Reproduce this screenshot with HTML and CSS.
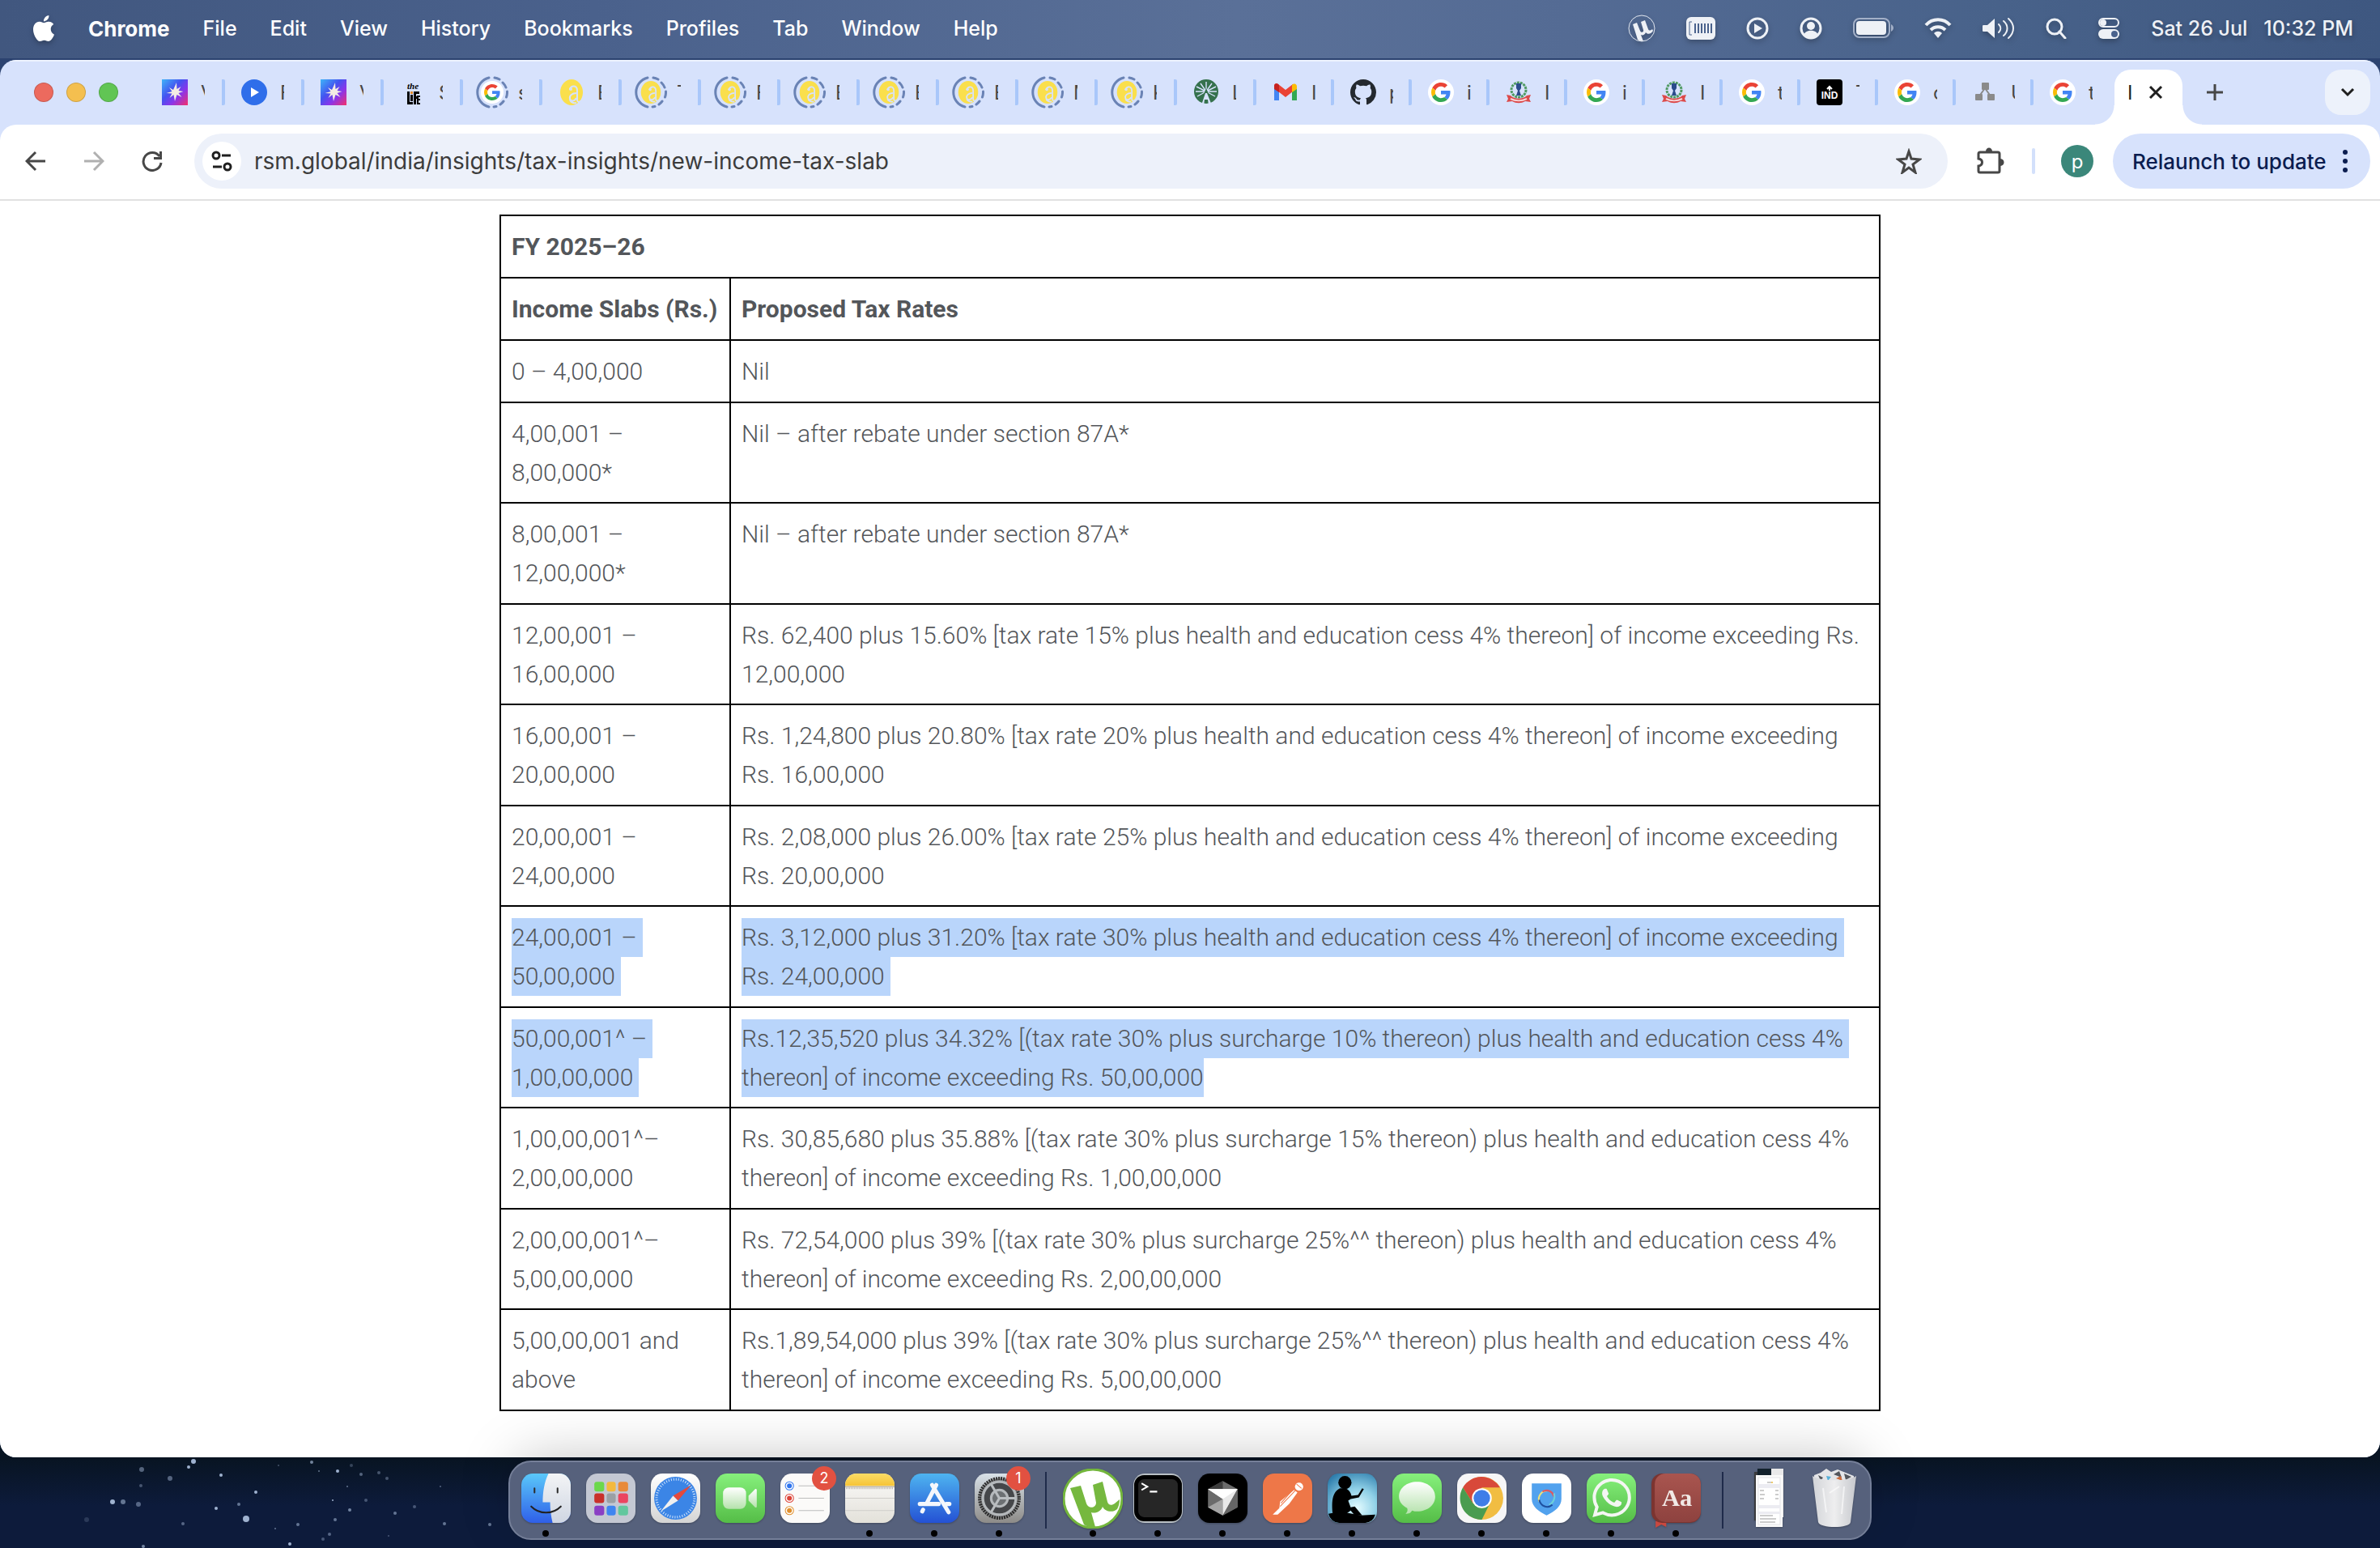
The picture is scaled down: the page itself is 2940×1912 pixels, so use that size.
FILE: index.html
```html
<!DOCTYPE html>
<html lang="en">
<head>
<meta charset="utf-8">
<title>New income tax slab</title>
<link rel="stylesheet" href="styles.css">
</head>
<body>
<svg class="sprite" aria-hidden="true">
  <defs>
    <linearGradient id="gStar" x1="0" y1="0" x2="1" y2="1"><stop offset="0" stop-color="#3fb4f8"/><stop offset=".4" stop-color="#4353f0"/><stop offset=".65" stop-color="#8a35ea"/><stop offset="1" stop-color="#f5306a"/></linearGradient>
    <linearGradient id="gBlue" x1="0" y1="0" x2="0" y2="1"><stop offset="0" stop-color="#5ac8fa"/><stop offset="1" stop-color="#2f5fe8"/></linearGradient>
    <linearGradient id="gStore" x1="0" y1="0" x2="0" y2="1"><stop offset="0" stop-color="#4eb4f0"/><stop offset="1" stop-color="#2451d4"/></linearGradient>
    <linearGradient id="gGrey" x1="0" y1="0" x2="0" y2="1"><stop offset="0" stop-color="#f3f4f6"/><stop offset="1" stop-color="#cfd6e2"/></linearGradient>
    <linearGradient id="gGreen" x1="0" y1="0" x2="0" y2="1"><stop offset="0" stop-color="#86f07c"/><stop offset="1" stop-color="#55bd47"/></linearGradient>
    <linearGradient id="gWhite" x1="0" y1="0" x2="0" y2="1"><stop offset="0" stop-color="#ffffff"/><stop offset="1" stop-color="#d4d4d4"/></linearGradient>
    <linearGradient id="gCam" x1="0" y1="0" x2="0" y2="1"><stop offset="0" stop-color="#ffffff"/><stop offset="1" stop-color="#b5e2ac"/></linearGradient>
    <linearGradient id="gYellow" x1="0" y1="0" x2="0" y2="1"><stop offset="0" stop-color="#fbdc66"/><stop offset="1" stop-color="#f6c436"/></linearGradient>
    <linearGradient id="gNote" x1="0" y1="0" x2="0" y2="1"><stop offset="0" stop-color="#fbfaf9"/><stop offset="1" stop-color="#e3e1da"/></linearGradient>
    <linearGradient id="gSet" x1="0" y1="0" x2="0" y2="1"><stop offset="0" stop-color="#d8e1e8"/><stop offset="1" stop-color="#8d8b88"/></linearGradient>
    <linearGradient id="gBook" x1="0" y1="0" x2="0" y2="1"><stop offset="0" stop-color="#a9554f"/><stop offset="1" stop-color="#8e423f"/></linearGradient>
    <radialGradient id="gSky" cx=".6" cy=".7" r=".8"><stop offset="0" stop-color="#e3fbff"/><stop offset=".5" stop-color="#8ecfe6"/><stop offset="1" stop-color="#2f7fae"/></radialGradient>
    <linearGradient id="gTrash" x1="0" y1="0" x2="1" y2="0"><stop offset="0" stop-color="#d2d4d8"/><stop offset=".5" stop-color="#eeeeef"/><stop offset="1" stop-color="#c6c8cd"/></linearGradient>
  </defs>

  <symbol id="apple" viewBox="0 0 24 24"><path fill="#fff" d="M12.152 6.896c-.948 0-2.415-1.078-3.96-1.04-2.04.027-3.91 1.183-4.961 3.014-2.117 3.675-.546 9.103 1.519 12.09 1.013 1.454 2.208 3.09 3.792 3.039 1.52-.065 2.09-.987 3.935-.987 1.831 0 2.35.987 3.96.948 1.637-.026 2.676-1.48 3.676-2.948 1.156-1.688 1.636-3.325 1.662-3.415-.039-.013-3.182-1.221-3.22-4.857-.026-3.04 2.48-4.494 2.597-4.559-1.429-2.09-3.623-2.324-4.39-2.376-2-.156-3.675 1.09-4.61 1.09zM15.53 3.83c.843-1.012 1.4-2.427 1.245-3.83-1.207.052-2.662.805-3.532 1.818-.78.896-1.454 2.338-1.273 3.714 1.338.104 2.715-.688 3.559-1.701"/></symbol>

  <!-- favicons, 32 by 32 -->
  <symbol id="star" viewBox="0 0 32 32"><rect width="32" height="32" fill="url(#gStar)"/><path fill="#f4ece4" d="M18 4l.5 8 5-3-3 5 6 1-6 2 4 5-6-3-2.500 8-1.500-8-5 4 3-5.500-7-.5 7-2-3.500-5 5 3z"/></symbol>
  <symbol id="play" viewBox="0 0 32 32"><circle cx="16" cy="16" r="16" fill="#2f6eea"/><path fill="#fff" d="M12 10v12l10-6z"/></symbol>
  <symbol id="g" viewBox="0 0 48 48"><path fill="#EA4335" d="M24 9.500c3.540 0 6.710 1.220 9.210 3.600l6.850-6.850C35.900 2.380 30.470 0 24 0 14.620 0 6.510 5.380 2.560 13.220l7.980 6.190C12.430 13.720 17.740 9.500 24 9.500z"/><path fill="#4285F4" d="M46.980 24.550c0-1.570-.15-3.090-.38-4.550H24v9.020h12.940c-.58 2.960-2.260 5.480-4.780 7.180l7.730 6c4.510-4.180 7.090-10.360 7.090-17.650z"/><path fill="#FBBC05" d="M10.530 28.590c-.48-1.450-.76-2.990-.76-4.590s.27-3.140.76-4.590l-7.980-6.190C.92 16.460 0 20.120 0 24c0 3.880.92 7.540 2.560 10.780l7.970-6.190z"/><path fill="#34A853" d="M24 48c6.480 0 11.930-2.130 15.890-5.810l-7.730-6c-2.150 1.450-4.920 2.300-8.160 2.300-6.260 0-11.570-4.220-13.470-9.910l-7.980 6.190C6.510 42.620 14.620 48 24 48z"/></symbol>
  <symbol id="google" viewBox="0 0 32 32"><circle cx="16" cy="16" r="16" fill="#fff"/><use href="#g" x="4" y="4" width="24" height="24"/></symbol>
  <symbol id="amark" viewBox="0 0 32 32"><ellipse cx="16" cy="16" rx="14" ry="16" fill="#fadf4c"/><path fill="none" stroke="#d7e2fc" stroke-width="2" stroke-linecap="round" d="M14 12c2-5 9-5 9 2v11c0 3 2 4 4 2"/><path fill="none" stroke="#d7e2fc" stroke-width="2" d="M22 17c-5 0-9 3-8 7s6 3 8-1M14 24c0 4 4 6 8 5"/><circle cx="15" cy="12" r="2" fill="#d7e2fc"/></symbol>
  <symbol id="ring" viewBox="0 0 40 40"><g fill="none" stroke="#6a83b5" stroke-width="3" stroke-linecap="round"><path d="M16 2a18.500 18.500 0 0 0 0 36"/><path d="M23 2a18 18 0 0 1 6 2M33 8a18 18 0 0 1 4 6M38.500 19a18 18 0 0 1-1 7M34 31a18 18 0 0 1-4 4M25 37.500a18 18 0 0 1-3 .5"/></g></symbol>
  <symbol id="ringG" viewBox="0 0 40 40"><use href="#ring" width="40" height="40"/><circle cx="20" cy="20" r="14" fill="#fff"/><use href="#g" x="10" y="10" width="20" height="20"/></symbol>
  <symbol id="ringA" viewBox="0 0 40 40"><use href="#ring" width="40" height="40"/><use href="#amark" x="6" y="6" width="28" height="28"/></symbol>
  <symbol id="leaf" viewBox="0 0 32 32"><circle cx="16" cy="15" r="15" fill="#35714d"/><g stroke="#d7e2fc" stroke-width="1.400"><path d="M16 15V3M16 15L9 5M16 15L23 5M16 15L4 9M16 15L28 9M16 15L3 15M16 15L29 15M16 15L5 21M16 15L27 21"/></g><path fill="#35714d" d="M12 20l4-9 4 9 3 5H9z"/><path fill="#d7e2fc" d="M10 32l5-15h2l6 15h-4l-1-7h-4l-1 7z"/></symbol>
  <symbol id="gmail" viewBox="0 0 32 32"><path fill="#4285f4" d="M2 9v17h6V14z"/><path fill="#34a853" d="M24 14v12h6V9z"/><path fill="#ea4335" d="M2 8c0-3 3-4 5-2l9 7 9-7v9l-9 7-9-7-5-4z"/><path fill="#fbbc04" d="M24 7c3-3 6-1 6 2v3l-6 4z"/><path fill="#c5221f" d="M2 8v4l6 4V7C6 4 2 5 2 8z"/></symbol>
  <symbol id="github" viewBox="0 0 16 16"><path fill="#24292f" d="M8 0C3.580 0 0 3.580 0 8c0 3.540 2.290 6.530 5.470 7.590.4.070.55-.17.55-.38 0-.19-.01-.82-.01-1.490-2.010.37-2.530-.49-2.690-.94-.09-.23-.48-.94-.82-1.130-.28-.15-.68-.52-.01-.53.63-.01 1.080.58 1.230.82.72 1.210 1.870.87 2.330.66.070-.52.280-.87.510-1.070-1.780-.2-3.640-.89-3.640-3.950 0-.87.310-1.590.820-2.150-.080-.2-.360-1.020.080-2.120 0 0 .67-.21 2.200.82.640-.18 1.320-.27 2-.27s1.360.090 2 .27c1.530-1.040 2.200-.82 2.200-.82.440 1.100.160 1.920.080 2.120.510.560.820 1.270.820 2.150 0 3.070-1.870 3.750-3.650 3.950.290.250.540.730.540 1.480 0 1.070-.01 1.930-.01 2.200 0 .210.150.460.550.380A8.010 8.010 0 0016 8c0-4.420-3.580-8-8-8z"/></symbol>
  <symbol id="emblem" viewBox="0 0 32 32"><circle cx="16" cy="13" r="9" fill="none" stroke="#4f9a62" stroke-width="3" stroke-dasharray="3 1"/><path fill="#2b4b8c" d="M13 5h6v6l-2 3 2 6h-6l2-6-2-3z"/><path fill="#dc4a4a" d="M1 19l5 1c5 5 15 5 20 0l5-1-2 5 2 4-7-1c-5 3-11 3-16 0l-7 1 2-4z"/><path d="M6 24c6 3 14 3 20 0" stroke="#f7d5d8" stroke-width="2" fill="none"/></symbol>
  <symbol id="tree" viewBox="0 0 32 32"><path d="M16 11L8 22M16 11l8 11" stroke="#8a8a8a" stroke-width="2"/><g fill="#8a8a8a"><rect x="12" y="4" width="9" height="9" rx="1"/><rect x="4" y="18" width="9" height="8" rx="1"/><rect x="19" y="18" width="9" height="8" rx="1"/></g></symbol>

  <!-- dock icons, 60 by 60 -->
  <symbol id="finder" viewBox="0 0 60 60"><rect width="60" height="60" rx="14" fill="url(#gBlue)"/><path fill="url(#gGrey)" d="M33 0h13a14 14 0 0 1 14 14v32a14 14 0 0 1-14 14h-8c-2-8-3-16-3-25h-9c0-13 2-25 7-35z"/><path d="M16 18v5M44 18v5" stroke="#2b2b2b" stroke-width="2" stroke-linecap="round"/><path d="M12 40c10 10 26 10 36 0" fill="none" stroke="#222" stroke-width="2" stroke-linecap="round"/></symbol>
  <symbol id="launchpad" viewBox="0 0 60 60"><rect width="60" height="60" rx="14" fill="#c4c8d3"/><rect x="10" y="10" width="12" height="12" rx="3" fill="#6bd84c"/><rect x="25" y="10" width="11" height="12" rx="3" fill="#f3b93e"/><rect x="39" y="10" width="12" height="12" rx="3" fill="#e88a3a"/><rect x="10" y="24" width="12" height="12" rx="3" fill="#c9302a"/><rect x="25" y="24" width="11" height="12" rx="3" fill="#9ba0a5"/><rect x="39" y="24" width="12" height="12" rx="3" fill="#ea4560"/><rect x="10" y="39" width="12" height="12" rx="3" fill="#8a3fc4"/><rect x="25" y="39" width="11" height="12" rx="3" fill="#3f85f0"/><rect x="39" y="39" width="12" height="12" rx="3" fill="#62c79e"/></symbol>
  <symbol id="safari" viewBox="0 0 60 60"><rect width="60" height="60" rx="14" fill="url(#gWhite)"/><circle cx="30" cy="30" r="26" fill="#3b85e6"/><circle cx="30" cy="30" r="23" fill="none" stroke="#cfe3fb" stroke-width="3" stroke-dasharray="1 2"/><path fill="#e5493c" d="M49 14L27 27l6 6z"/><path fill="#f0f0f0" d="M12 46l15-19 6 6z"/></symbol>
  <symbol id="facetime" viewBox="0 0 60 60"><rect width="60" height="60" rx="14" fill="url(#gGreen)"/><rect x="9" y="17" width="28" height="26" rx="7" fill="url(#gCam)"/><path fill="url(#gCam)" d="M40 27l8-8c1-1 2 0 2 1v20c0 1-1 2-2 1l-8-8z"/></symbol>
  <symbol id="reminders" viewBox="0 0 60 60"><rect width="60" height="60" rx="14" fill="#fbfaf9"/><path d="M22 15h31M22 30h31M22 45h31" stroke="#bdbdbd"/><g fill="#fff" stroke-width="1"><circle cx="11" cy="15" r="5" stroke="#2f74ee"/><circle cx="11" cy="30" r="5" stroke="#dc4439"/><circle cx="11" cy="45" r="5" stroke="#e08f2d"/></g><circle cx="11" cy="15" r="3" fill="#2f74ee"/><circle cx="11" cy="30" r="3" fill="#dc4439"/><circle cx="11" cy="45" r="3" fill="#e08f2d"/></symbol>
  <symbol id="notes" viewBox="0 0 60 60"><rect width="60" height="60" rx="14" fill="url(#gNote)"/><path fill="url(#gYellow)" d="M0 15v-1A14 14 0 0 1 14 0h32a14 14 0 0 1 14 14v1z"/><path d="M0 16h60" stroke="#aaa08a"/><path d="M1 18h58" stroke="#b8b4ae" stroke-width="2" stroke-dasharray="1 1"/><path d="M0 30h60M0 45h60" stroke="#cfcdca"/></symbol>
  <symbol id="store" viewBox="0 0 60 60"><rect width="60" height="60" rx="14" fill="url(#gStore)"/><g stroke="#f4f7fc" stroke-width="5" stroke-linecap="round"><path d="M32 14L20 37M27 14l20 33M12 37h23M44 37h4M16 44l-1 2"/></g></symbol>
  <symbol id="settings" viewBox="0 0 60 60"><rect width="60" height="60" rx="14" fill="url(#gSet)"/><circle cx="30" cy="30" r="24" fill="#8d8f91" stroke="#2d2d2d" stroke-width="4" stroke-dasharray="2 1"/><circle cx="30" cy="30" r="20" fill="#45474a" stroke="#b4b8bb" stroke-width="3"/><circle cx="30" cy="30" r="10" fill="#6c7073" stroke="#b4b8bb" stroke-width="3"/><path d="M30 30h20M30 30L20 13M30 30L20 47" stroke="#b9bdc0" stroke-width="3"/></symbol>
  <symbol id="torrent" viewBox="0 0 74 74"><circle cx="37" cy="37" r="36" fill="#fff" stroke="#73b63c" stroke-width="3"/><path fill="#76b83f" d="M9 24l13-3 7 22c2 7 12 6 12-1l-4-22 12-4 6 25c1 4 5 5 9 2l6-5c0 5-1 8-3 12-6 5-15 3-18-3-2 6-9 9-14 7l5 18c-5 1-10 0-14-3z"/></symbol>
  <symbol id="terminal" viewBox="0 0 60 60"><rect width="60" height="60" rx="14" fill="#b9c0c5"/><rect x="1" y="2" width="58" height="56" rx="12"/><rect x="6" y="7" width="48" height="46" rx="7" fill="#262626"/><path d="M10 12l7 4-7 4M20 22h9" fill="none" stroke="#fff" stroke-width="2"/></symbol>
  <symbol id="cursor" viewBox="0 0 60 60"><rect width="60" height="60" rx="14"/><path fill="#6b6b6b" d="M30 9l18 10v22L30 51 12 41V19z"/><path fill="#3c3c3c" d="M12 19L30 9v10z"/><path fill="#a5a5a5" d="M12 41l18-10v20z"/><path fill="#e9e9e9" d="M12 19h36L30 51V31z"/><path fill="#666" d="M30 51l18-32v22z"/><path fill="#fff" d="M12 19h36L30 31z"/></symbol>
  <symbol id="postman" viewBox="0 0 60 60"><rect width="60" height="60" rx="14" fill="#ee7748"/><circle cx="44" cy="16" r="5" fill="#fff"/><path fill="#fff" d="M38 20l4 3-10 14-14 13-6 0 8-8 1-8z"/><path d="M41 13l6 5M40 20L21 40M36 20L22 36" stroke="#ee7748" stroke-width="1"/></symbol>
  <symbol id="kindle" viewBox="0 0 60 60"><rect width="60" height="60" rx="14" fill="url(#gSky)"/><path d="M1 49c8-2 16-3 24-1l15 3 18-1a14 14 0 0 1-12 10H14A14 14 0 0 1 1 49z"/><circle cx="21" cy="11" r="8"/><path d="M6 48c-1-13-1-25 9-30h7c4 2 6 5 7 9l8-1 5-8 2 1-6 10-10 2-3 2 3 8 5-1 9 11h-9l-5-6-7 5z"/></symbol>
  <symbol id="messages" viewBox="0 0 60 60"><rect width="60" height="60" rx="14" fill="url(#gGreen)"/><path fill="url(#gCam)" d="M30 10c13 0 22 8 22 18s-9 18-22 18c-2 0-4 0-6-1-2 3-4 4-8 4 2-2 3-4 2-7-6-3-10-8-10-14 0-10 9-18 22-18z"/></symbol>
  <symbol id="chrome" viewBox="0 0 60 60"><rect width="60" height="60" rx="14" fill="#f6f6f7"/><circle cx="30" cy="30" r="26" fill="#f1bd42"/><path fill="#d8493a" d="M7 17a26 26 0 0 1 45 0H30L19 36z"/><path fill="#4a9c50" d="M7 17l12 19 11 6 10-6-10 20A26 26 0 0 1 7 17z"/><circle cx="30" cy="30" r="12" fill="#fff"/><circle cx="30" cy="30" r="10" fill="#3f7de8"/></symbol>
  <symbol id="shield" viewBox="0 0 60 60"><rect width="60" height="60" rx="14" fill="#fff"/><path fill="#52a2ee" d="M12 12h36v19c0 9-8 15-18 20-10-5-18-11-18-20z"/><g fill="none" stroke-width="2"><path d="M21 34a10 10 0 0 1 10-13" stroke="#efe27b"/><path d="M25 22c7-4 13 1 14 6" stroke="#dd5a62"/><path d="M39 24c2 6-1 12-6 14" stroke="#6cd0d9"/><path d="M21 32c2 8 10 11 16 6" stroke="#1f4f9f"/></g></symbol>
  <symbol id="whatsapp" viewBox="0 0 60 60"><rect width="60" height="60" rx="14" fill="url(#gGreen)"/><svg x="7" y="6" width="47" height="47" viewBox="0 0 24 24"><path fill="#f4f6f3" d="M17.472 14.382c-.297-.149-1.758-.867-2.030-.967-.273-.099-.471-.148-.67.15-.197.297-.767.966-.94 1.164-.173.199-.347.223-.644.075-.297-.15-1.255-.463-2.390-1.475-.883-.788-1.480-1.761-1.653-2.059-.173-.297-.018-.458.13-.606.134-.133.298-.347.446-.52.149-.174.198-.298.298-.497.099-.198.050-.371-.025-.52-.075-.149-.669-1.612-.916-2.207-.242-.579-.487-.5-.669-.51-.173-.008-.371-.01-.57-.01-.198 0-.52.074-.792.372-.272.297-1.040 1.016-1.040 2.479 0 1.462 1.065 2.875 1.213 3.074.149.198 2.096 3.200 5.077 4.487.709.306 1.262.489 1.694.625.712.227 1.360.195 1.871.118.571-.085 1.758-.719 2.006-1.413.248-.694.248-1.289.173-1.413-.074-.124-.272-.198-.57-.347m-5.421 7.403h-.004a9.870 9.870 0 01-5.031-1.378l-.361-.214-3.741.982.998-3.648-.235-.374a9.860 9.860 0 01-1.510-5.260c.001-5.450 4.436-9.884 9.888-9.884 2.640 0 5.122 1.030 6.988 2.898a9.825 9.825 0 012.893 6.994c-.003 5.450-4.437 9.884-9.885 9.884m8.413-18.297A11.815 11.815 0 0012.050 0C5.495 0 .16 5.335.157 11.892c0 2.096.547 4.142 1.588 5.945L.057 24l6.305-1.654a11.882 11.882 0 005.683 1.448h.005c6.554 0 11.890-5.335 11.893-11.893a11.821 11.821 0 00-3.480-8.413Z"/></svg></symbol>
  <symbol id="minimized" viewBox="0 0 40 74"><rect x="1" y="4" width="8" height="60" fill="#3a3a3c"/><rect x="5" width="32" height="60" fill="#e9e9ea"/><rect x="5" width="17" height="8" fill="#13212c"/><rect x="3" y="8" width="33" height="64" fill="#fafafa"/><rect x="6" y="11" width="27" height="58" fill="#fff" stroke="#e3e3e7"/><path fill="#ececf2" d="M6 19h27v5H6zM6 45h27v4H6zM6 53h27v3H6z"/><path d="M17 17h5M8 27h5M27 27h4M8 32h6M27 32h4M8 37h5M27 37h4M8 58h16M8 62h20M8 66h19" stroke="#999"/><circle cx="23" cy="17" r="1" fill="#e8b93c"/></symbol>
  <symbol id="trash" viewBox="0 0 56 74"><path fill="#e4e5e8" d="M3 8l8-3 7-5 6 4 8-3 10 4 10 4v6H3z"/><path fill="#53565c" d="M8 8l6 3-3 4zM27 7l7-4 3 8zM40 6l9 4-7 4z"/><path fill="#58b0d8" d="M18 9l6 1-4 5z"/><path fill="#c9693a" d="M30 12l6-3 2 6z"/><path fill="url(#gTrash)" d="M1 9c10 7 44 7 54 0l-7 57c-1 8-38 8-40 0z"/><path d="M14 24l4 30M40 22l-3 34M22 30l12-8" stroke="#fff" stroke-width="2" opacity=".6" fill="none"/></symbol>
</svg>

<header class="menubar">
  <nav class="menus">
    <button aria-label="Apple menu"><svg width="32" height="32"><use href="#apple"/></svg></button>
    <button class="app-name">Chrome</button>
    <button>File</button>
    <button>Edit</button>
    <button>View</button>
    <button>History</button>
    <button>Bookmarks</button>
    <button>Profiles</button>
    <button>Tab</button>
    <button>Window</button>
    <button>Help</button>
  </nav>
  <div class="status">
    <svg width="34" height="34" viewBox="0 0 34 34"><circle cx="17" cy="17" r="16" fill="none" stroke="#e3e8f0" stroke-width="1"/><path fill="#eef1f6" d="M6 12l5-2 4 10c1 3 5 2 4-1l-3-10 5-2 4 11c1 2 3 2 5 0l1 2c-2 4-7 5-9 2-1 3-4 4-6 3l3 8c-3 0-5-1-7-2z"/></svg>
    <svg width="36" height="28" viewBox="0 0 36 28"><rect width="36" height="28" rx="6" fill="#eef1f6"/><path d="M7 6H4v16h3" fill="none" stroke="#4a628c" stroke-width="1"/><path d="M11 8v12M15 8v12M19 8v12M23 8v12M27 8v12M31 8v12" fill="none" stroke="#4a628c" stroke-width="2"/></svg>
    <svg width="28" height="28" viewBox="0 0 28 28"><circle cx="14" cy="14" r="12" fill="none" stroke="#eef1f6" stroke-width="3"/><path fill="#eef1f6" d="M10 8v12l10-6z"/></svg>
    <svg width="28" height="28" viewBox="0 0 28 28"><circle cx="14" cy="14" r="12" fill="none" stroke="#eef1f6" stroke-width="3"/><circle cx="14" cy="11" r="5" fill="#eef1f6"/><path fill="#eef1f6" d="M5 22c3-7 15-7 18 0-4 5-14 5-18 0z"/></svg>
    <svg width="50" height="26" viewBox="0 0 50 26"><rect x="1" y="1" width="44" height="23" rx="7" fill="none" stroke="#a3b0c8" stroke-width="2"/><rect x="4" y="4" width="37" height="17" rx="4" fill="#eef1f6"/><path fill="#a3b0c8" d="M47 8c4 2 4 7 0 9z"/></svg>
    <svg width="34" height="26" viewBox="0 0 34 26"><g fill="none" stroke="#eef1f6" stroke-width="4"><path d="M2 9c8-9 22-9 30 0M8 15c5-5 13-5 18 0"/></g><path fill="#eef1f6" d="M17 25l-5-6c3-3 7-3 10 0z"/></svg>
    <svg width="40" height="28" viewBox="0 0 40 28"><path fill="#eef1f6" d="M1 10h5l9-8v24l-9-8H1c-1 0-1-1-1-2v-4c0-1 0-2 1-2z"/><g fill="none" stroke="#eef1f6" stroke-width="2" stroke-linecap="round"><path d="M20 9c3 3 3 7 0 10M26 5c6 5 6 13 0 18M32 2c8 7 8 17 0 24"/></g></svg>
    <svg width="26" height="26" viewBox="0 0 26 26"><circle cx="11" cy="11" r="9" fill="none" stroke="#eef1f6" stroke-width="3"/><path d="M17 17l7 8" stroke="#eef1f6" stroke-width="3" stroke-linecap="round"/></svg>
    <svg width="28" height="28" viewBox="0 0 28 28"><rect x="2" y="2" width="24" height="10" rx="5" fill="none" stroke="#eef1f6" stroke-width="2"/><circle cx="7" cy="7" r="4" fill="#eef1f6"/><rect x="1" y="15" width="26" height="12" rx="6" fill="#eef1f6"/><circle cx="21" cy="21" r="4" fill="#4a628c"/></svg>
    <time class="clock"><span>Sat 26 Jul</span><span>10:32 PM</span></time>
  </div>
</header>

<section class="window">
  <div class="tabstrip">
    <div class="lights"><button class="close" aria-label="Close"></button><button class="minimise" aria-label="Minimise"></button><button class="zoom" aria-label="Zoom"></button></div>
    <nav class="tabs">
      <a href="#" class="tab wide"><svg><use href="#star"/></svg><span>V</span></a>
      <a href="#" class="tab wide"><svg><use href="#play"/></svg><span>F</span></a>
      <a href="#" class="tab wide"><svg><use href="#star"/></svg><span>V</span></a>
      <a href="#" class="tab wide"><svg viewBox="0 0 32 32"><text x="9" y="12" font-family="Liberation Serif, serif" font-style="italic" font-weight="700" font-size="11">the</text><path d="M9 15h3v13h4v3H9zM13 19h3v8h-3zM17 15h7v3h-4v3h3v3h-3v7h-3zM21 20h4v2h-2v2h2v2h-2v3h2v2h-4z"/><path fill="#e08b2c" d="M13 15h3v3h-3z"/></svg><span>S</span></a>
      <a href="#" class="tab wide ringed"><svg><use href="#ringG"/></svg><span>s</span></a>
      <a href="#" class="tab wide"><svg><use href="#amark"/></svg><span>E</span></a>
      <a href="#" class="tab wide ringed"><svg><use href="#ringA"/></svg><span>T</span></a>
      <a href="#" class="tab wide ringed"><svg><use href="#ringA"/></svg><span>F</span></a>
      <a href="#" class="tab wide ringed"><svg><use href="#ringA"/></svg><span>E</span></a>
      <a href="#" class="tab wide ringed"><svg><use href="#ringA"/></svg><span>E</span></a>
      <a href="#" class="tab wide ringed"><svg><use href="#ringA"/></svg><span>E</span></a>
      <a href="#" class="tab wide ringed"><svg><use href="#ringA"/></svg><span>M</span></a>
      <a href="#" class="tab wide ringed"><svg><use href="#ringA"/></svg><span>K</span></a>
      <a href="#" class="tab wide"><svg><use href="#leaf"/></svg><span>L</span></a>
      <a href="#" class="tab"><svg><use href="#gmail"/></svg><span>I</span></a>
      <a href="#" class="tab"><svg><use href="#github"/></svg><span>p</span></a>
      <a href="#" class="tab"><svg><use href="#google"/></svg><span>i</span></a>
      <a href="#" class="tab"><svg><use href="#emblem"/></svg><span>I</span></a>
      <a href="#" class="tab"><svg><use href="#google"/></svg><span>i</span></a>
      <a href="#" class="tab"><svg><use href="#emblem"/></svg><span>I</span></a>
      <a href="#" class="tab"><svg><use href="#google"/></svg><span>t</span></a>
      <a href="#" class="tab"><svg viewBox="0 0 32 32"><rect width="32" height="32" rx="4"/><text x="16" y="24" text-anchor="middle" font-family="Liberation Sans, sans-serif" font-weight="700" font-size="12" fill="#fff">IND</text><path d="M16 14V9m-3 3l3-3 3 3" stroke="#fff" stroke-width="2" fill="none"/></svg><span>T</span></a>
      <a href="#" class="tab"><svg><use href="#google"/></svg><span>c</span></a>
      <a href="#" class="tab"><svg><use href="#tree"/></svg><span>U</span></a>
      <a href="#" class="tab last"><svg><use href="#google"/></svg><span>t</span></a>
      <div class="tab-active"><span>I</span><button aria-label="Close tab"><svg width="18" height="18" viewBox="0 0 18 18"><path d="M2 2l14 14M16 2L2 16" stroke="#1f1f1f" stroke-width="3"/></svg></button></div>
    </nav>
    <button class="new-tab" aria-label="New tab"><svg width="20" height="20" viewBox="0 0 20 20"><path d="M10 0v20M0 10h20" stroke="#474747" stroke-width="3"/></svg></button>
    <button class="tab-search" aria-label="Search tabs"><svg width="18" height="12" viewBox="0 0 18 12"><path d="M2 2l7 7 7-7" fill="none" stroke="#1f1f1f" stroke-width="3"/></svg></button>
  </div>

  <div class="toolbar">
    <div class="history">
      <button aria-label="Back"><svg width="26" height="26" viewBox="0 0 26 26"><path d="M25 13H3M13 2L2 13l11 11" fill="none" stroke="#474747" stroke-width="3"/></svg></button>
      <button aria-label="Forward"><svg width="26" height="26" viewBox="0 0 26 26"><path d="M1 13h22M13 2l11 11-11 11" fill="none" stroke="#b0b0b0" stroke-width="3"/></svg></button>
      <button aria-label="Reload"><svg width="26" height="26" viewBox="0 0 26 26"><path d="M22 7a11 11 0 1 0 2 8" fill="none" stroke="#474747" stroke-width="3"/><path fill="#474747" d="M25 1v10H15V8h7V1z"/></svg></button>
    </div>
    <div class="omnibox">
      <button class="site" aria-label="Site information"><svg width="26" height="26" viewBox="0 0 26 26"><g fill="none" stroke="#1f1f1f" stroke-width="3"><circle cx="6" cy="6" r="4"/><path d="M13 6h11M2 20h11"/><circle cx="20" cy="20" r="4"/></g></svg></button>
      <input type="text" aria-label="Address" value="rsm.global/india/insights/tax-insights/new-income-tax-slab">
      <button aria-label="Bookmark"><svg width="32" height="32" viewBox="0 0 32 32"><path d="M16 4l3 9 10 1-8 6 3 10-8-6-8 6 3-10-8-6 10-1z" fill="none" stroke="#474747" stroke-width="3"/></svg></button>
    </div>
    <button class="extensions" aria-label="Extensions"><svg width="36" height="36" viewBox="0 0 36 36"><path d="M6 7h22a2 2 0 0 1 2 2v21a2 2 0 0 1-2 2H6a2 2 0 0 1-2-2v-6c6-1 6-8 0-9V9a2 2 0 0 1 2-2z" fill="none" stroke="#474747" stroke-width="3"/><path fill="#474747" d="M13 6c0-6 8-6 8 0zM31 15c6 0 6 9 0 9z"/></svg></button>
    <span class="divider"></span>
    <button class="avatar" aria-label="Profile">p</button>
    <button class="relaunch"><span>Relaunch to update</span><svg width="6" height="28" viewBox="0 0 6 28"><g fill="#0b1d50"><circle cx="3" cy="3" r="3"/><circle cx="3" cy="14" r="3"/><circle cx="3" cy="25" r="3"/></g></svg></button>
  </div>

  <main class="page">
    <table class="slabs">
      <colgroup><col class="slab"><col></colgroup>
      <thead>
        <tr><th colspan="2">FY 2025–26</th></tr>
        <tr><th>Income Slabs (Rs.)</th><th>Proposed Tax Rates</th></tr>
      </thead>
      <tbody>
        <tr><td>0 – 4,00,000</td><td>Nil</td></tr>
        <tr><td>4,00,001 –<br>8,00,000*</td><td>Nil – after rebate under section 87A*</td></tr>
        <tr><td>8,00,001 –<br>12,00,000*</td><td>Nil – after rebate under section 87A*</td></tr>
        <tr><td>12,00,001 –<br>16,00,000</td><td>Rs. 62,400 plus 15.60% [tax rate 15% plus health and education cess 4% thereon] of income exceeding Rs.<br>12,00,000</td></tr>
        <tr><td>16,00,001 –<br>20,00,000</td><td>Rs. 1,24,800 plus 20.80% [tax rate 20% plus health and education cess 4% thereon] of income exceeding<br>Rs. 16,00,000</td></tr>
        <tr><td>20,00,001 –<br>24,00,000</td><td>Rs. 2,08,000 plus 26.00% [tax rate 25% plus health and education cess 4% thereon] of income exceeding<br>Rs. 20,00,000</td></tr>
        <tr><td><mark>24,00,001 –</mark><br><mark>50,00,000</mark></td><td><mark>Rs. 3,12,000 plus 31.20% [tax rate 30% plus health and education cess 4% thereon] of income exceeding</mark><br><mark>Rs. 24,00,000</mark></td></tr>
        <tr><td><mark>50,00,001^ –</mark><br><mark>1,00,00,000</mark></td><td><mark>Rs.12,35,520 plus 34.32% [(tax rate 30% plus surcharge 10% thereon) plus health and education cess 4%</mark><br><mark class="end">thereon] of income exceeding Rs. 50,00,000</mark></td></tr>
        <tr><td>1,00,00,001^–<br>2,00,00,000</td><td>Rs. 30,85,680 plus 35.88% [(tax rate 30% plus surcharge 15% thereon) plus health and education cess 4%<br>thereon] of income exceeding Rs. 1,00,00,000</td></tr>
        <tr><td>2,00,00,001^–<br>5,00,00,000</td><td>Rs. 72,54,000 plus 39% [(tax rate 30% plus surcharge 25%^^ thereon) plus health and education cess 4%<br>thereon] of income exceeding Rs. 2,00,00,000</td></tr>
        <tr><td>5,00,00,001 and<br>above</td><td>Rs.1,89,54,000 plus 39% [(tax rate 30% plus surcharge 25%^^ thereon) plus health and education cess 4%<br>thereon] of income exceeding Rs. 5,00,00,000</td></tr>
      </tbody>
    </table>
  </main>
</section>

<footer class="desktop">
  <svg class="stars" viewBox="0 0 640 112" width="640" height="112" aria-hidden="true">
    <g fill="#9fb2cf"><circle cx="239" cy="5" r="3"/><circle cx="233" cy="12" r="2"/><circle cx="175" cy="15" r="3" opacity=".5"/><circle cx="210" cy="26" r="3" opacity=".5"/><circle cx="273" cy="22" r="2"/><circle cx="174" cy="35" r="2" opacity=".4"/><circle cx="139" cy="55" r="3"/><circle cx="152" cy="55" r="3" opacity=".6"/><circle cx="171" cy="58" r="3" opacity=".5"/><circle cx="316" cy="43" r="2"/><circle cx="267" cy="63" r="2"/><circle cx="295" cy="58" r="2" opacity=".6"/><circle cx="304" cy="76" r="4"/><circle cx="107" cy="77" r="3" opacity=".2"/><circle cx="226" cy="82" r="2" opacity=".5"/><circle cx="368" cy="83" r="2" opacity=".6"/><circle cx="358" cy="107" r="2"/><circle cx="177" cy="110" r="2" opacity=".7"/><circle cx="385" cy="6" r="2" opacity=".7"/><circle cx="394" cy="17" r="1" opacity=".6"/><circle cx="417" cy="17" r="2"/><circle cx="446" cy="21" r="2" opacity=".5"/><circle cx="468" cy="19" r="2" opacity=".4"/><circle cx="478" cy="26" r="2" opacity=".4"/><circle cx="429" cy="36" r="1" opacity=".6"/><circle cx="411" cy="53" r="1"/><circle cx="432" cy="65" r="2" opacity=".7"/><circle cx="452" cy="53" r="2" opacity=".4"/><circle cx="414" cy="77" r="2" opacity=".6"/><circle cx="488" cy="69" r="2" opacity=".6"/><circle cx="512" cy="61" r="2" opacity=".4"/><circle cx="544" cy="36" r="1" opacity=".5"/><circle cx="549" cy="82" r="2" opacity=".6"/><circle cx="605" cy="83" r="2" opacity=".6"/><circle cx="407" cy="95" r="2" opacity=".5"/><circle cx="399" cy="101" r="2" opacity=".4"/><circle cx="480" cy="97" r="1" opacity=".4"/><circle cx="340" cy="88" r="1" opacity=".6"/><circle cx="344" cy="10" r="1" opacity=".4"/><circle cx="434" cy="10" r="2" opacity=".3"/></g>
  </svg>
  <nav class="dock">
    <button class="app running" aria-label="Finder"><svg><use href="#finder"/></svg></button>
    <button class="app" aria-label="Launchpad"><svg><use href="#launchpad"/></svg></button>
    <button class="app" aria-label="Safari"><svg><use href="#safari"/></svg></button>
    <button class="app" aria-label="FaceTime"><svg><use href="#facetime"/></svg></button>
    <button class="app" aria-label="Reminders"><svg><use href="#reminders"/></svg><span class="badge">2</span></button>
    <button class="app running" aria-label="Notes"><svg><use href="#notes"/></svg></button>
    <button class="app running" aria-label="App Store"><svg><use href="#store"/></svg></button>
    <button class="app running" aria-label="Settings"><svg><use href="#settings"/></svg><span class="badge">1</span></button>
    <span class="rule"></span>
    <button class="app running round" aria-label="Torrent"><svg><use href="#torrent"/></svg></button>
    <button class="app running" aria-label="Terminal"><svg><use href="#terminal"/></svg></button>
    <button class="app running" aria-label="Cursor"><svg><use href="#cursor"/></svg></button>
    <button class="app running" aria-label="Postman"><svg><use href="#postman"/></svg></button>
    <button class="app running" aria-label="Kindle"><svg><use href="#kindle"/></svg></button>
    <button class="app running" aria-label="Messages"><svg><use href="#messages"/></svg></button>
    <button class="app running" aria-label="Chrome"><svg><use href="#chrome"/></svg></button>
    <button class="app running" aria-label="VPN"><svg><use href="#shield"/></svg></button>
    <button class="app running" aria-label="WhatsApp"><svg><use href="#whatsapp"/></svg></button>
    <button class="app running book" aria-label="Dictionary"><svg viewBox="0 0 60 66"><path fill="#c9483f" d="M5 58h13v7l-6-3-7 4z"/><rect width="60" height="60" rx="13" fill="#7c3430"/><rect x="4" width="56" height="59" rx="13" fill="url(#gBook)"/><text x="31" y="39" text-anchor="middle" font-family="Liberation Serif, serif" font-weight="700" font-size="30" fill="#f1e9e6">Aa</text></svg></button>
    <span class="rule"></span>
    <button class="app tall" aria-label="Minimised window"><svg><use href="#minimized"/></svg></button>
    <button class="app tall" aria-label="Bin"><svg><use href="#trash"/></svg></button>
  </nav>
</footer>
</body>
</html>
```
FILE: styles.css
```css
* { box-sizing: border-box; }

body {
  margin: 0;
  min-height: 100vh;
  display: flex;
  flex-direction: column;
  background: linear-gradient(#2c4370 0, #2c4370 200px, #0a1830 1700px, #081422 1800px, #0d1b3b 1860px);
  font-family: Inter, "Liberation Sans", sans-serif;
  color: #1f1f1f;
}

button {
  display: flex;
  align-items: center;
  justify-content: center;
  padding: 0;
  border: 0;
  background: none;
  color: inherit;
  font: inherit;
  white-space: nowrap;
}

svg { display: block; flex: none; }
.sprite { position: absolute; width: 0; height: 0; }

/* menu bar */
.menubar {
  display: flex;
  justify-content: space-between;
  align-items: center;
  height: 72px;
  margin-bottom: 2px;
  padding: 0 33px 2px 38px;
  background: linear-gradient(90deg, #41577f, #4a618c 25%, #5a7098 52%, #546b94 66%, #48628a 84%, #3e5780);
  color: #fff;
  font-size: 25px;
  font-weight: 500;
  text-shadow: 0 3px 6px rgba(0, 0, 0, .3);
}
.menus { display: flex; align-items: center; gap: 41px; }
.menus svg, .status svg { filter: drop-shadow(0 3px 3px rgba(0, 0, 0, .25)); }
.app-name { margin-left: -2px; font-size: 26px; font-weight: 700; }
.status { display: flex; align-items: center; gap: 38px; color: #eef1f6; }
.clock { display: flex; gap: 20px; }

/* browser window */
.window {
  flex: 1;
  display: flex;
  flex-direction: column;
  overflow: hidden;
  border-radius: 20px;
  background: #d7e2fc;
}
.tabstrip {
  display: flex;
  align-items: center;
  height: 80px;
  padding-right: 12px;
  box-shadow: inset 0 2px #edf2fe;
}
.lights { display: flex; gap: 16px; width: 180px; padding-left: 42px; }
.lights button { width: 24px; height: 24px; border-radius: 50%; border: 1px solid rgba(0, 0, 0, .15); }
.close { background: #ec6a5e; }
.minimise { background: #f4bf4f; }
.zoom { background: #61c554; }

.tabs { display: flex; align-items: center; height: 80px; font-size: 24px; }
.tab {
  display: flex;
  align-items: center;
  gap: 16px;
  width: 96px;
  height: 32px;
  padding-left: 20px;
  border-right: 4px solid #a9c7fa;
  border-radius: 2px;
  color: #474747;
  text-decoration: none;
}
.tab.wide { width: 98px; }
.tab svg { width: 32px; height: 32px; }
.tab span, .tab-active span { width: 5px; overflow: hidden; }
.tab.ringed { gap: 12px; padding-left: 16px; }
.tab.ringed svg { width: 40px; height: 40px; }
.tab.last { border-color: transparent; }

.tab-active {
  position: relative;
  display: flex;
  align-items: center;
  justify-content: space-between;
  align-self: flex-end;
  width: 84px;
  height: 68px;
  margin: 0 0 0 4px;
  padding: 0 24px 12px 16px;
  border-radius: 20px 20px 0 0;
  background: #fff;
}
.tab-active::before, .tab-active::after {
  content: "";
  position: absolute;
  bottom: 0;
  width: 24px;
  height: 24px;
}
.tab-active::before { right: 100%; background: radial-gradient(circle at 0 0, transparent 23px, #fff 24px); }
.tab-active::after { left: 100%; background: radial-gradient(circle at 100% 0, transparent 23px, #fff 24px); }
.new-tab { width: 80px; height: 56px; }
.tab-search { width: 56px; height: 56px; margin-left: auto; border-radius: 20px; background: #edf2fb; }

.toolbar {
  display: flex;
  align-items: center;
  height: 94px;
  padding: 0 12px 2px 8px;
  border-bottom: 2px solid #e1e1e1;
  border-radius: 20px 20px 0 0;
  background: #fff;
}
.history { display: flex; width: 232px; }
.history button { width: 72px; height: 68px; }
.omnibox {
  flex: 1;
  display: flex;
  align-items: center;
  height: 68px;
  padding: 0 32px 0 10px;
  border-radius: 34px;
  background: #edf1fa;
}
.site { width: 48px; height: 48px; border-radius: 50%; background: #fff; }
.omnibox input {
  flex: 1;
  height: 48px;
  margin: 0;
  padding: 0 16px;
  border: 0;
  background: none;
  color: #3c3c3c;
  font: 28px Inter, "Liberation Sans", sans-serif;
}
.extensions { width: 104px; height: 68px; }
.divider { width: 4px; height: 32px; border-radius: 2px; background: #d3e0fb; }
.avatar { width: 40px; height: 40px; margin: 0 24px 0 32px; border-radius: 50%; background: #3b877a; color: #fff; font-size: 24px; }
.relaunch {
  justify-content: flex-start;
  gap: 20px;
  height: 68px;
  width: 318px;
  padding-left: 24px;
  border-radius: 34px;
  background: #d7e2fc;
  color: #0b1d50;
  font-size: 26px;
  font-weight: 500;
}

/* page */
.page { flex: 1; padding: 17px 0 56px; background: #fff; }
.slabs {
  width: min(1706px, 92%);
  margin: 0 auto;
  border-collapse: collapse;
  table-layout: fixed;
  color: #53565a;
  font: 300 30px/48px Roboto, "Open Sans", sans-serif;
}
.slab { width: 284px; }
.slabs th, .slabs td {
  padding: 14px 0 13px 13px;
  border: 2px solid #000;
  text-align: left;
  vertical-align: top;
  white-space: nowrap;
}
.slabs th { font-weight: 700; }
.slabs tbody tr:nth-child(even) td { padding-bottom: 12px; }
mark {
  display: inline-block;
  height: 48px;
  padding-right: 7px;
  background: #b9d5fb;
  color: inherit;
  vertical-align: top;
}
mark.end { padding-right: 0; }

/* desktop and dock */
.desktop {
  position: relative;
  display: flex;
  justify-content: center;
  padding: 4px 0 10px;
}
.stars { position: absolute; left: 0; top: 0; }
.dock {
  position: relative;
  display: flex;
  align-items: center;
  height: 98px;
  padding: 0 4px;
  border: 2px solid #757f98;
  border-radius: 28px;
  background: #56617c;
  box-shadow: 0 -12px 70px -12px rgba(0, 0, 0, .26);
}
.app { position: relative; width: 80px; height: 94px; padding-bottom: 5px; }
.app svg { width: 61px; height: 61px; filter: drop-shadow(0 1px 1px rgba(0, 0, 0, .25)); }
.app.round svg { width: 74px; height: 74px; }
.app.book { padding-bottom: 0; }
.app.book svg { width: 61px; height: 67px; }
.app.tall svg { width: 56px; height: 74px; }
.running::after {
  content: "";
  position: absolute;
  left: 36px;
  bottom: 2px;
  width: 8px;
  height: 8px;
  border-radius: 50%;
  background: #000;
}
.badge {
  position: absolute;
  left: 49px;
  top: 5px;
  width: 30px;
  height: 30px;
  border-radius: 50%;
  background: #e25141;
  color: #fff;
  font-size: 18px;
  line-height: 30px;
}
.rule { width: 36px; height: 70px; background: linear-gradient(#1f2b4a, #1f2b4a) center / 2px 100% no-repeat; }
```
